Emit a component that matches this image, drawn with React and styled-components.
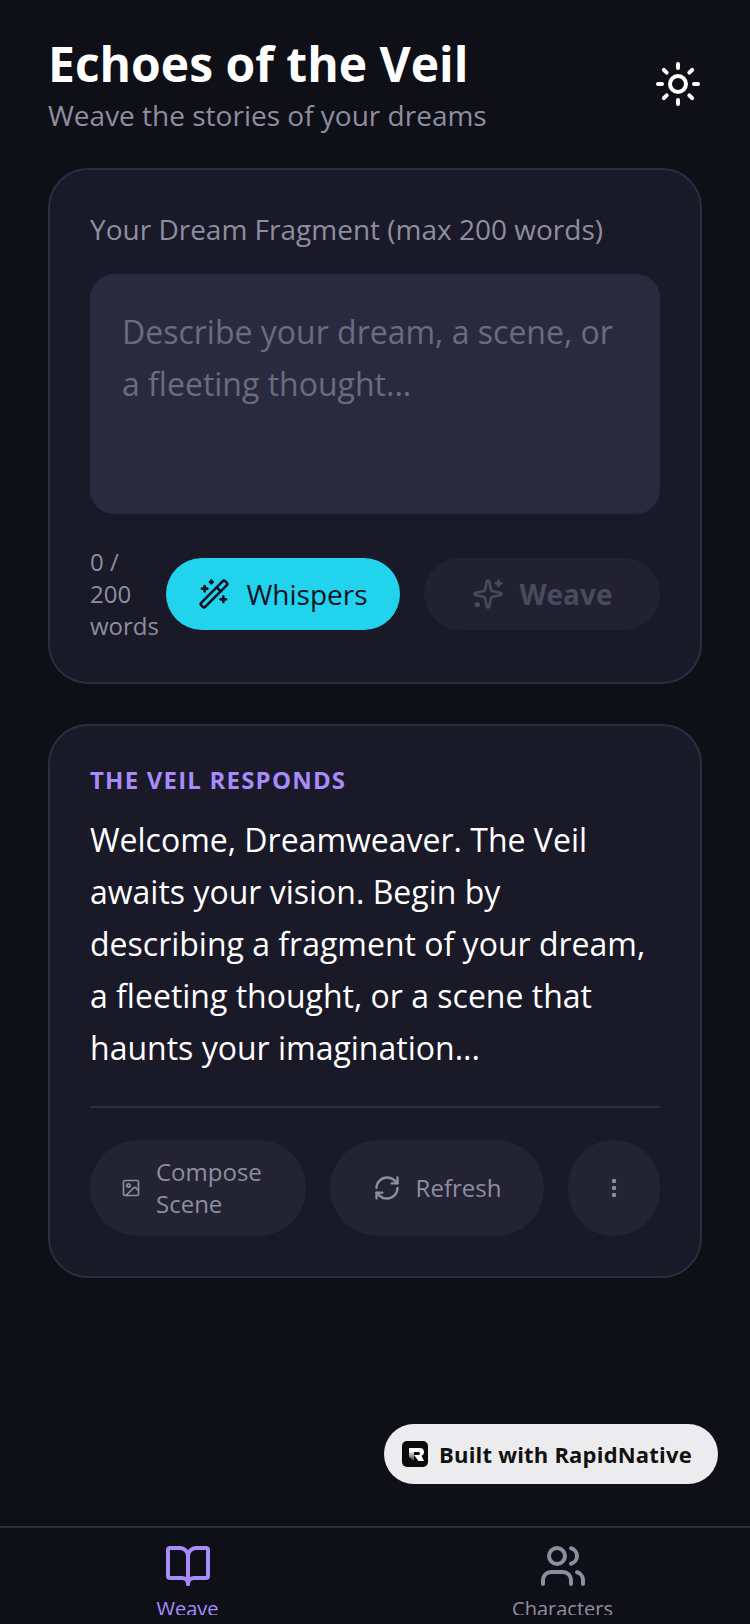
import React from 'react';
import styled, { createGlobalStyle } from 'styled-components';
import {
  BookOpen, EllipsisVertical, Image, RefreshCw, Sun, Users, WandSparkles,
} from 'lucide-react';

const GlobalStyle = createGlobalStyle`
  html, body {
    margin: 0;
    padding: 0;
    background: #0f0f17;
  }
  * {
    box-sizing: border-box;
  }
`;

const Page = styled.div`
  position: relative;
  width: 750px;
  height: 1624px;
  overflow: hidden;
  display: flex;
  flex-direction: column;
  background: #0f0f17;
  font-family: "Open Sans", "Noto Sans", sans-serif;
`;

const Main = styled.main`
  flex: 1;
  padding: 32px 48px 0;
`;

const Header = styled.header`
  display: flex;
  justify-content: space-between;
  align-items: center;
  margin-bottom: 33px;
`;

const Title = styled.h1`
  margin: 0;
  font-size: 48px;
  line-height: 64px;
  font-weight: 700;
  color: #fff;
`;

const Subtitle = styled.p`
  margin: -1px 0 0;
  font-size: 28px;
  line-height: 40px;
  color: #8e8ea0;
`;

const ThemeButton = styled.div`
  display: flex;
  color: #fff;
`;

const Card = styled.section`
  background: #191928;
  border: 2px solid #2d2d42;
  border-radius: 40px;
  padding: 39px 40px 40px;
  margin-bottom: 40px;
`;

const FieldLabel = styled.div`
  font-size: 28px;
  line-height: 40px;
  color: #8e8ea0;
  margin-bottom: 25px;
`;

const DreamInput = styled.div`
  height: 240px;
  background: #2a2a3e;
  border-radius: 24px;
  padding: 32px;
  font-size: 32px;
  line-height: 52px;
  color: #6b6b80;
`;

const ActionRow = styled.div`
  display: flex;
  align-items: center;
  margin-top: 32px;
`;

const Count = styled.div`
  width: 76px;
  font-size: 24px;
  line-height: 32px;
  color: #8e8ea0;
`;

const PillButton = styled.div`
  display: flex;
  align-items: center;
  justify-content: center;
  gap: 16px;
  width: ${(p) => p.$width}px;
  height: 72px;
  margin-left: ${(p) => (p.$muted ? 24 : 0)}px;
  border-radius: 36px;
  font-size: 28px;
  font-weight: ${(p) => (p.$muted ? 700 : 400)};
  color: ${(p) => (p.$muted ? '#4a4a5e' : '#0f1222')};
  background: ${(p) => (p.$muted ? '#212131' : '#22d3ee')};
`;

const Eyebrow = styled.div`
  font-size: 24px;
  line-height: 30px;
  font-weight: 700;
  letter-spacing: 1.2px;
  color: #a78bfa;
  margin-bottom: 19px;
`;

const Message = styled.p`
  margin: 0 0 32px;
  font-size: 32px;
  line-height: 52px;
  color: #fff;
`;

const ToolRow = styled.div`
  display: flex;
  justify-content: space-between;
  border-top: 2px solid #2d2d42;
  padding-top: 32px;
`;

const ToolButton = styled.div`
  display: flex;
  align-items: center;
  justify-content: ${(p) => (p.$start ? 'flex-start' : 'center')};
  gap: 15px;
  width: ${(p) => p.$width}px;
  height: 96px;
  padding-left: ${(p) => (p.$start ? 31 : 0)}px;
  border-radius: 48px;
  background: #232334;
  color: #8e8ea0;
  font-size: 24px;
  line-height: 32px;
`;

const Badge = styled.div`
  position: absolute;
  left: 384px;
  top: 1424px;
  width: 334px;
  height: 60px;
  display: flex;
  align-items: center;
  gap: 11px;
  padding-left: 18px;
  border-radius: 30px;
  background: #ececee;
  color: #111;
  font-size: 22px;
  letter-spacing: 0.2px;
  font-weight: 700;
  white-space: nowrap;
`;

const BadgeLogo = styled.svg`
  width: 26px;
  height: 26px;
  flex-shrink: 0;
`;

const TabBar = styled.nav`
  height: 98px;
  flex-shrink: 0;
  display: flex;
  border-top: 2px solid #2d2d42;
  background: #0f0f17;
  overflow: hidden;
`;

const Tab = styled.div`
  flex: 1;
  display: flex;
  flex-direction: column;
  align-items: center;
  padding-top: 14px;
  gap: 5px;
  color: ${(p) => (p.$active ? '#a78bfa' : '#8e8ea0')};
`;

const TabLabel = styled.div`
  font-size: 20px;
  line-height: 28px;
  height: 20px;
  overflow: hidden;
`;

function SparkleIcon() {
  return (
    <svg width="32" height="32" viewBox="0 0 24 24" fill="none" stroke="currentColor" strokeWidth="2" strokeLinecap="round" strokeLinejoin="round">
      <path d="M11.017 2.814a1 1 0 0 1 1.966 0l1.051 5.558a2 2 0 0 0 1.594 1.594l5.558 1.051a1 1 0 0 1 0 1.966l-5.558 1.051a2 2 0 0 0-1.594 1.594l-1.051 5.558a1 1 0 0 1-1.966 0l-1.051-5.558a2 2 0 0 0-1.594-1.594l-5.558-1.051a1 1 0 0 1 0-1.966l5.558-1.051a2 2 0 0 0 1.594-1.594z" />
      <path d="M20 2v4" />
      <path d="M22 4h-4" />
      <circle cx="4" cy="20" r="1" fill="currentColor" />
    </svg>
  );
}

export default function App() {
  return (
    <Page>
      <GlobalStyle />
      <Main>
        <Header>
          <div>
            <Title>Echoes of the Veil</Title>
            <Subtitle>Weave the stories of your dreams</Subtitle>
          </div>
          <ThemeButton><Sun size={48} strokeWidth={2} /></ThemeButton>
        </Header>

        <Card>
          <FieldLabel>Your Dream Fragment (max 200 words)</FieldLabel>
          <DreamInput>Describe your dream, a scene, or a fleeting thought...</DreamInput>
          <ActionRow>
            <Count>0 / 200 words</Count>
            <PillButton $width={234}>
              <WandSparkles size={32} strokeWidth={2} />
              Whispers
            </PillButton>
            <PillButton $width={236} $muted>
              <SparkleIcon />
              Weave
            </PillButton>
          </ActionRow>
        </Card>

        <Card>
          <Eyebrow>THE VEIL RESPONDS</Eyebrow>
          <Message>
            Welcome, Dreamweaver. The Veil awaits your vision. Begin by describing a fragment of
            your dream, a fleeting thought, or a scene that haunts your imagination...
          </Message>
          <ToolRow>
            <ToolButton $width={216} $start>
              <Image size={20} strokeWidth={2} />
              <span>Compose<br />Scene</span>
            </ToolButton>
            <ToolButton $width={214}>
              <RefreshCw size={28} strokeWidth={2} />
              Refresh
            </ToolButton>
            <ToolButton $width={92}>
              <EllipsisVertical size={24} strokeWidth={2.5} />
            </ToolButton>
          </ToolRow>
        </Card>
      </Main>

      <Badge>
        <BadgeLogo viewBox="0 0 26 26">
          <defs>
            <linearGradient id="logoStem" x1="0" y1="0" x2="0" y2="1">
              <stop offset="0.2" stopColor="#fff" />
              <stop offset="1" stopColor="#333" />
            </linearGradient>
          </defs>
          <rect width="26" height="26" rx="5" fill="#0b0b0b" />
          <path d="M7 7h5v13l-5-4z" fill="url(#logoStem)" />
          <path d="M7 7h11a4 4 0 0 1 1.500 7.700L22 20h-5.500l-4.500-6h4.500a1.500 1.500 0 0 0 0-3H7z" fill="#fff" />
        </BadgeLogo>
        Built with RapidNative
      </Badge>

      <TabBar>
        <Tab $active>
          <BookOpen size={48} strokeWidth={2} />
          <TabLabel>Weave</TabLabel>
        </Tab>
        <Tab>
          <Users size={48} strokeWidth={2} />
          <TabLabel>Characters</TabLabel>
        </Tab>
      </TabBar>
    </Page>
  );
}
